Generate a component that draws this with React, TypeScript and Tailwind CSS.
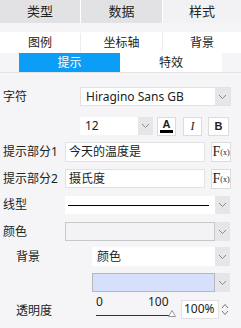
import React from 'react';

const Chevron = () => (
  <svg width="9" height="6" viewBox="0 0 9 6" fill="none">
    <path d="M1 1l3.5 3.5L8 1" stroke="#8a8a8a" strokeWidth="1" />
  </svg>
);

const Arrow = ({ w = 15 }: { w?: number }) => (
  <div className="flex items-center justify-center bg-[#e6e6e8] self-stretch" style={{ width: w }}>
    <Chevron />
  </div>
);

const Label = ({ children, className = '' }: { children: React.ReactNode; className?: string }) => (
  <div className={`text-[12px] text-[#222] ${className}`}>{children}</div>
);

const Fx = () => (
  <div className="w-[20px] h-[20px] bg-white border border-[#dcdcdc] flex items-center justify-center">
    <span className="font-['Liberation_Serif',serif] text-[14px] leading-none text-[#222]">F</span>
    <span className="font-['Liberation_Serif',serif] text-[8px] leading-none text-[#222] mt-[2px]">(x)</span>
  </div>
);

export default function App() {
  return (
    <div className="w-[241px] h-[328px] bg-[#f5f5f7] font-['Noto_Sans','Noto_Sans_CJK_SC',sans-serif] text-[#222] overflow-hidden">
      {/* top tabs */}
      <div className="flex h-[23px] text-[13px]">
        <div className="w-[80px] bg-[#e2e2e4] flex items-center justify-center">类型</div>
        <div className="w-[1px] bg-white" />
        <div className="w-[81px] bg-[#e2e2e4] flex items-center justify-center">数据</div>
        <div className="w-[1px] bg-white" />
        <div className="flex-1 bg-[#f2f2f4] flex items-center justify-center">样式</div>
      </div>
      <div className="h-[9px]" />
      {/* sub tabs */}
      <div className="flex h-[21px] bg-white text-[12px]">
        <div className="w-[80px] flex items-center justify-center">图例</div>
        <div className="w-[1px] bg-[#ececec] my-[1px]" />
        <div className="w-[81px] flex items-center justify-center">坐标轴</div>
        <div className="w-[1px] bg-[#ececec] my-[1px]" />
        <div className="flex-1 flex items-center justify-center">背景</div>
      </div>
      <div className="flex h-[20px] pl-[19px] text-[12px] border-b border-[#e4e4e6]">
        <div className="w-[101px] bg-[#0a9ef7] text-white flex items-center justify-center">提示</div>
        <div className="w-[102px] bg-white flex items-center justify-center">特效</div>
      </div>

      <div className="px-[3px]">
        {/* 字符 */}
        <div className="flex items-center mt-[14px] h-[19px]">
          <Label className="w-[77px]">字符</Label>
          <div className="w-[151px] h-full flex bg-white border border-[#e2e2e2]">
            <div className="flex-1 flex items-center pl-[5px] text-[12px]">Hiragino Sans GB</div>
            <Arrow />
          </div>
        </div>
        {/* font size */}
        <div className="flex items-center mt-[11px] h-[18px]">
          <div className="w-[77px]" />
          <div className="w-[73px] h-full flex bg-white">
            <div className="flex-1 flex items-center pl-[5px] text-[12px]">12</div>
            <Arrow />
          </div>
          <div className="w-[19px] h-[19px] ml-[4px] bg-white border border-[#dcdcdc] flex flex-col items-center justify-center">
            <span className="font-['Liberation_Sans',sans-serif] font-bold text-[11px] leading-[10px]">A</span>
            <div className="w-[13px] h-[3px] bg-black mt-[1px]" />
          </div>
          <div className="w-[19px] h-[19px] ml-[7px] bg-white border border-[#dcdcdc] flex items-center justify-center font-['Liberation_Serif',serif] italic text-[12px]">I</div>
          <div className="w-[21px] h-[19px] ml-[6px] bg-white border border-[#dcdcdc] flex items-center justify-center font-['Liberation_Sans',sans-serif] font-bold text-[11px]">B</div>
        </div>
        {/* 提示部分1 */}
        <div className="flex items-center mt-[7px] h-[20px]">
          <Label className="w-[62px]">提示部分1</Label>
          <div className="w-[140px] h-full bg-white border border-[#e2e2e2] flex items-center pl-[3px] text-[12px]">今天的温度是</div>
          <div className="ml-[6px]"><Fx /></div>
        </div>
        {/* 提示部分2 */}
        <div className="flex items-center mt-[7px] h-[19px]">
          <Label className="w-[62px]">提示部分2</Label>
          <div className="w-[140px] h-full bg-white border border-[#e2e2e2] flex items-center pl-[3px] text-[12px]">摄氏度</div>
          <div className="ml-[6px]"><Fx /></div>
        </div>
        {/* 线型 */}
        <div className="flex items-center mt-[8px] h-[18px]">
          <Label className="w-[62px]">线型</Label>
          <div className="w-[165px] h-full flex bg-white">
            <div className="flex-1 flex items-center pl-[3px] pr-[6px]">
              <div className="w-full h-[1px] bg-black" />
            </div>
            <Arrow />
          </div>
        </div>
        {/* 颜色 */}
        <div className="flex items-center mt-[8px] h-[19px]">
          <Label className="w-[62px]">颜色</Label>
          <div className="w-[165px] h-full flex">
            <div className="flex-1 bg-[#f3f3f5] border border-[#c8c8c8]" />
            <Arrow />
          </div>
        </div>
        {/* 背景 */}
        <div className="flex items-center mt-[6px] h-[19px]">
          <Label className="w-[89px] pl-[13px]">背景</Label>
          <div className="w-[138px] h-full flex bg-white">
            <div className="flex-1 flex items-center pl-[5px] text-[12px]">颜色</div>
            <Arrow />
          </div>
        </div>
        {/* swatch */}
        <div className="flex items-center mt-[7px] h-[19px]">
          <div className="w-[89px]" />
          <div className="w-[138px] h-full flex">
            <div className="flex-1 bg-[#d6e0fc] border border-[#b8b8bc]" />
            <Arrow />
          </div>
        </div>
        {/* 透明度 */}
        <div className="flex items-center mt-[5px] h-[24px]">
          <Label className="w-[93px] pl-[13px] mt-[4px]">透明度</Label>
          <div className="relative w-[80px] h-full">
            <span className="absolute left-0 top-[-1px] text-[12px] leading-none">0</span>
            <span className="absolute left-[52px] top-[-1px] text-[12px] leading-none">100</span>
            <div className="absolute left-0 top-[18px] w-[76px] h-[1px] bg-[#333]" />
            <svg className="absolute left-[72px] top-[13px]" width="8" height="7" viewBox="0 0 8 7">
              <path d="M4 0.5L7.5 6.5H0.5Z" fill="white" stroke="#999" strokeWidth="1" />
            </svg>
          </div>
          <div className="w-[38px] h-[19px] ml-[5px] bg-white border border-[#e2e2e2] flex items-center pl-[2px] text-[12px]">100%</div>
          <div className="flex flex-col items-center ml-[2px] gap-[1px]">
            <svg width="8" height="6" viewBox="0 0 8 6"><path d="M1 5l3-3.5L7 5" stroke="#777" fill="none" /></svg>
            <svg width="8" height="6" viewBox="0 0 8 6"><path d="M1 1l3 3.5L7 1" stroke="#777" fill="none" /></svg>
          </div>
        </div>
      </div>
    </div>
  );
}
